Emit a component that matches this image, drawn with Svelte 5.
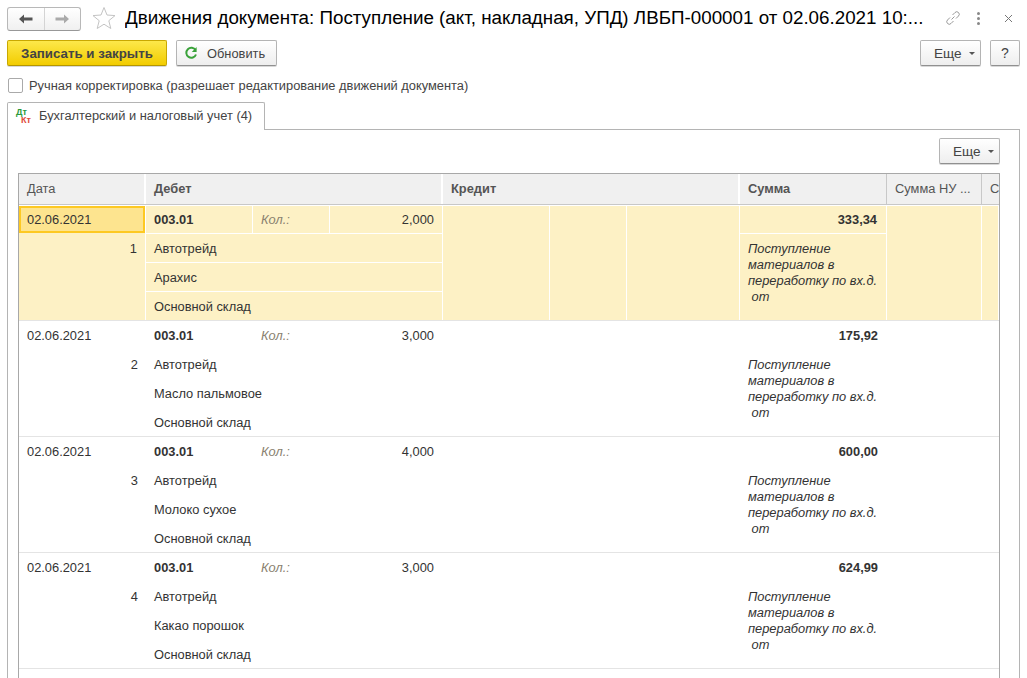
<script>
  const rows = [
    { n: 1, qty: '2,000', item: 'Арахис', sum: '333,34', sel: true },
    { n: 2, qty: '3,000', item: 'Масло пальмовое', sum: '175,92' },
    { n: 3, qty: '4,000', item: 'Молоко сухое', sum: '600,00' },
    { n: 4, qty: '3,000', item: 'Какао порошок', sum: '624,99' }
  ];
</script>

<div class="page">
  <header class="top">
    <div class="nav">
      <button class="navb" aria-label="Назад">
        <svg width="14" height="10" viewBox="0 0 14 10"><path d="M0 5 L5 0.5 V3.5 H13.5 V6.5 H5 V9.5 Z" fill="#555"/></svg>
      </button>
      <button class="navb last" aria-label="Вперед">
        <svg width="14" height="10" viewBox="0 0 14 10"><path d="M14 5 L9 0.5 V3.5 H0.5 V6.5 H9 V9.5 Z" fill="#aaa"/></svg>
      </button>
    </div>
    <svg class="star" width="24" height="24" viewBox="0 0 24 24"><path d="M12 1.5 L15 9 L23 9.6 L16.8 14.7 L18.8 22.5 L12 18.2 L5.2 22.5 L7.2 14.7 L1 9.6 L9 9 Z" fill="#fff" stroke="#c4c4c4" stroke-width="1"/></svg>
    <h1>Движения документа: Поступление (акт, накладная, УПД) ЛВБП-000001 от 02.06.2021 10:...</h1>
    <svg class="link" width="16" height="16" viewBox="0 0 16 16" fill="none" stroke="#999" stroke-width="1"><path d="M6.5 9.5 L9.5 6.5"/><path d="M7.5 5 L10 2.5 a2.4 2.4 0 0 1 3.5 3.5 L11 8.5"/><path d="M8.5 11 L6 13.5 a2.4 2.4 0 0 1 -3.5 -3.5 L5 7.5"/></svg>
    <span class="dots"><i></i><i></i><i></i></span>
    <svg class="close" width="9" height="9" viewBox="0 0 9 9" stroke="#777" stroke-width="1"><path d="M1 1 L8 8 M8 1 L1 8"/></svg>
  </header>

  <div class="cmd">
    <button class="btn primary">Записать и закрыть</button>
    <button class="btn refresh">
      <svg width="14" height="14" viewBox="0 0 14 14" fill="none"><path d="M11.6 4.2 A5 5 0 1 0 12 8.5" stroke="#3aa23a" stroke-width="2"/><path d="M12.6 1 V6 H7.8 Z" fill="#3aa23a"/></svg>
      Обновить
    </button>
    <span class="grow"></span>
    <button class="btn more">Еще <b class="caret"></b></button>
    <button class="btn help">?</button>
  </div>

  <label class="check"><span class="box"></span>Ручная корректировка (разрешает редактирование движений документа)</label>

  <div class="tabs">
    <div class="tab">
      <span class="dtkt"><span class="dt">Дт</span><span class="kt">Кт</span></span>
      Бухгалтерский и налоговый учет (4)
    </div>
  </div>

  <section class="panel">
    <div class="panelbar"><button class="btn more">Еще <b class="caret"></b></button></div>
    <div class="table">
      <div class="thead">
        <div class="th c-date">Дата</div>
        <div class="th c-acc strong">Дебет</div>
        <div class="th c-acc strong">Кредит</div>
        <div class="th c-sum strong">Сумма</div>
        <div class="th c-nu">Сумма НУ ...</div>
        <div class="th c-end">С</div>
      </div>
      {#each rows as r}
        <div class="row" class:sel={r.sel}>
          <div class="cell c-date datecol">
            <div class="date">02.06.2021</div>
            <div class="num">{r.n}</div>
          </div>
          <div class="cell c-acc acc">
            <div class="line first">
              <span class="s1 bold">003.01</span>
              <span class="s2 kol">Кол.:</span>
              <span class="s3 qty">{r.qty}</span>
            </div>
            <div class="line">Автотрейд</div>
            <div class="line">{r.item}</div>
            <div class="line lastline">Основной склад</div>
          </div>
          <div class="cell c-acc credit">
            <span class="s1"></span><span class="s2"></span><span class="s3"></span>
          </div>
          <div class="cell c-sum sumcol">
            <div class="sumv">{r.sum}</div>
            <div class="desc">Поступление<br />материалов в<br />переработку по вх.д.<br />&nbsp;от</div>
          </div>
          <div class="cell c-nu"></div>
          <div class="cell c-end"></div>
        </div>
      {/each}
    </div>
  </section>
</div>

<style>
  :global(body) { margin: 0; background: #fff; }
  * { box-sizing: border-box; }
  .page {
    width: 1027px; height: 678px; overflow: hidden; background: #fff;
    font-family: "Liberation Sans", Arial, sans-serif; font-size: 12.85px; color: #333;
  }
  button { font: inherit; color: inherit; padding: 0; margin: 0; }

  .top { display: flex; align-items: center; height: 36px; padding: 0 0 0 7px; }
  .nav {
    display: flex; width: 74px; height: 24px; border: 1px solid #b8b8b8; border-bottom-color: #989898; border-radius: 3px;
    background: linear-gradient(#fff, #f0f0f0); margin-top: 1px;
  }
  .navb { flex: 1; border: 0; background: none; display: flex; align-items: center; justify-content: center; border-right: 1px solid #d4d4d4; }
  .navb.last { border-right: 0; }
  .star { margin-left: 11px; flex: none; }
  h1 { margin: 0 0 0 9px; font-size: 18.8px; font-weight: 400; color: #000; white-space: nowrap; width: 806px; overflow: hidden; }
  .link { margin-left: 14px; flex: none; }
  .dots { margin-left: 16px; display: flex; flex-direction: column; gap: 2px; width: 3px; }
  .dots i { display: block; width: 3px; height: 3px; background: #888; border-radius: 50%; }
  .close { margin-left: 24px; flex: none; }

  .cmd { display: flex; align-items: flex-start; height: 32px; padding: 4px 7px 0 7px; }
  .grow { flex: 1; }
  .btn {
    height: 26px; border: 1px solid #b4b4b4; border-bottom-color: #909090; border-radius: 2px; background: linear-gradient(#fff, #eee);
    display: inline-flex; align-items: center; justify-content: center; color: #444;
    box-shadow: 0 1px 0 #d8d8d8;
  }
  .primary {
    width: 160px; font-weight: 700; font-size: 13.3px; color: #444;
    background: linear-gradient(#fde84a, #f2cc00); border-color: #c9a800; border-bottom-color: #b49600;
  }
  .refresh { width: 101px; margin-left: 9px; gap: 9px; justify-content: flex-start; padding-left: 7px; }
  .more { width: 61px; gap: 7px; justify-content: flex-start; padding-left: 13px; font-size: 13.6px; }
  .help { width: 30px; margin-left: 9px; font-size: 14px; }
  .caret { display: inline-block; width: 0; height: 0; border: 3px solid transparent; border-top: 3px solid #555; border-bottom: 0; }

  .check { display: flex; align-items: center; height: 18px; padding-left: 8px; margin-top: 8px; color: #444; }
  .box { width: 15px; height: 15px; border: 1px solid #aaa; border-radius: 2px; margin-right: 6px; background: #fff; }

  .tabs { display: flex; padding-left: 7px; margin-top: 8px; height: 27px; }
  .tab {
    position: relative; width: 258px; height: 28px; border: 1px solid #b4b4b4; border-bottom: 0; border-radius: 2px 2px 0 0; background: #fff;
    display: flex; align-items: center; padding: 0 0 3px 8px; gap: 7px; color: #444; z-index: 1;
  }
  .dtkt { position: relative; width: 16px; height: 16px; margin-top: 2px; font-size: 9px; line-height: 8px; font-weight: 700; }
  .dt { position: absolute; left: 0; top: 0; color: #2a9a3a; }
  .kt { position: absolute; left: 5px; top: 8px; color: #e04a3a; }

  .panel { margin: 0 7px 0 7px; width: 1013px; height: 560px; border: 1px solid #b4b4b4; padding: 0 19px 0 10px; }
  .panelbar { display: flex; justify-content: flex-end; height: 43px; padding-top: 8px; }
  .table { width: 982px; height: 510px; border: 1px solid #a8a8a8; border-bottom: 0; overflow: hidden; }

  .thead, .row { display: flex; width: 980px; }
  .thead { height: 31px; border-bottom: 1px solid #c8c8c8; }
  .c-date { width: 127px; flex: none; }
  .c-acc { width: 297px; flex: none; }
  .c-sum { width: 147px; flex: none; }
  .c-nu { width: 95px; flex: none; }
  .c-end { width: 17px; flex: none; }
  .th { background: #f0f0f0; border-right: 2px solid #fff; display: flex; align-items: center; padding: 0 0 2px 8px; color: #555; white-space: nowrap; overflow: hidden; }
  .th:nth-child(n+4) { border-right: 1px solid #c8c8c8; }
  .th:last-child { border-right: 0; }
  .strong { font-weight: 700; }

  .row { height: 116px; padding-top: 1px; border-bottom: 1px solid #e4e4e4; color: #333; background-clip: content-box; }
  .row.sel { background-color: #fdf1c5; }
  .cell { height: 114px; }
  .sel .cell { border-right: 1px solid #fff; }
  .date { height: 27px; padding: 0 0 0 8px; line-height: 27px; }
  .sel .date { background: #fde48f; border: 2px solid #fdc923; padding-left: 6px; line-height: 23px; }
  .num { text-align: right; padding: 7px 8px 0 0; height: 26px; line-height: 18px; }

  .acc { display: flex; flex-direction: column; }
  .line { height: 29px; padding: 0 0 0 8px; line-height: 29px; white-space: nowrap; }
  .first { display: flex; height: 28px; padding: 0; line-height: 28px; }
  .lastline { height: 28px; }
  .sel .line { border-bottom: 1px solid #fff; }
  .sel .lastline { border-bottom: 0; }
  .s1 { width: 107px; padding-left: 8px; flex: none; }
  .s2 { width: 77px; padding-left: 8px; flex: none; }
  .s3 { width: 113px; padding-right: 9px; flex: none; text-align: right; }
  .sel .s1, .sel .s2 { border-right: 1px solid #fff; }
  .bold { font-weight: 700; }
  .kol { font-style: italic; color: #8a8170; }

  .credit { display: flex; }
  .credit span { display: block; height: 100%; padding: 0; }

  .sumcol { display: flex; flex-direction: column; }
  .sumv { height: 28px; line-height: 28px; text-align: right; padding-right: 9px; font-weight: 700; }
  .sel .sumv { border-bottom: 1px solid #fff; }
  .desc { padding: 7px 4px 0 8px; line-height: 16px; font-style: italic; white-space: nowrap; }
</style>
